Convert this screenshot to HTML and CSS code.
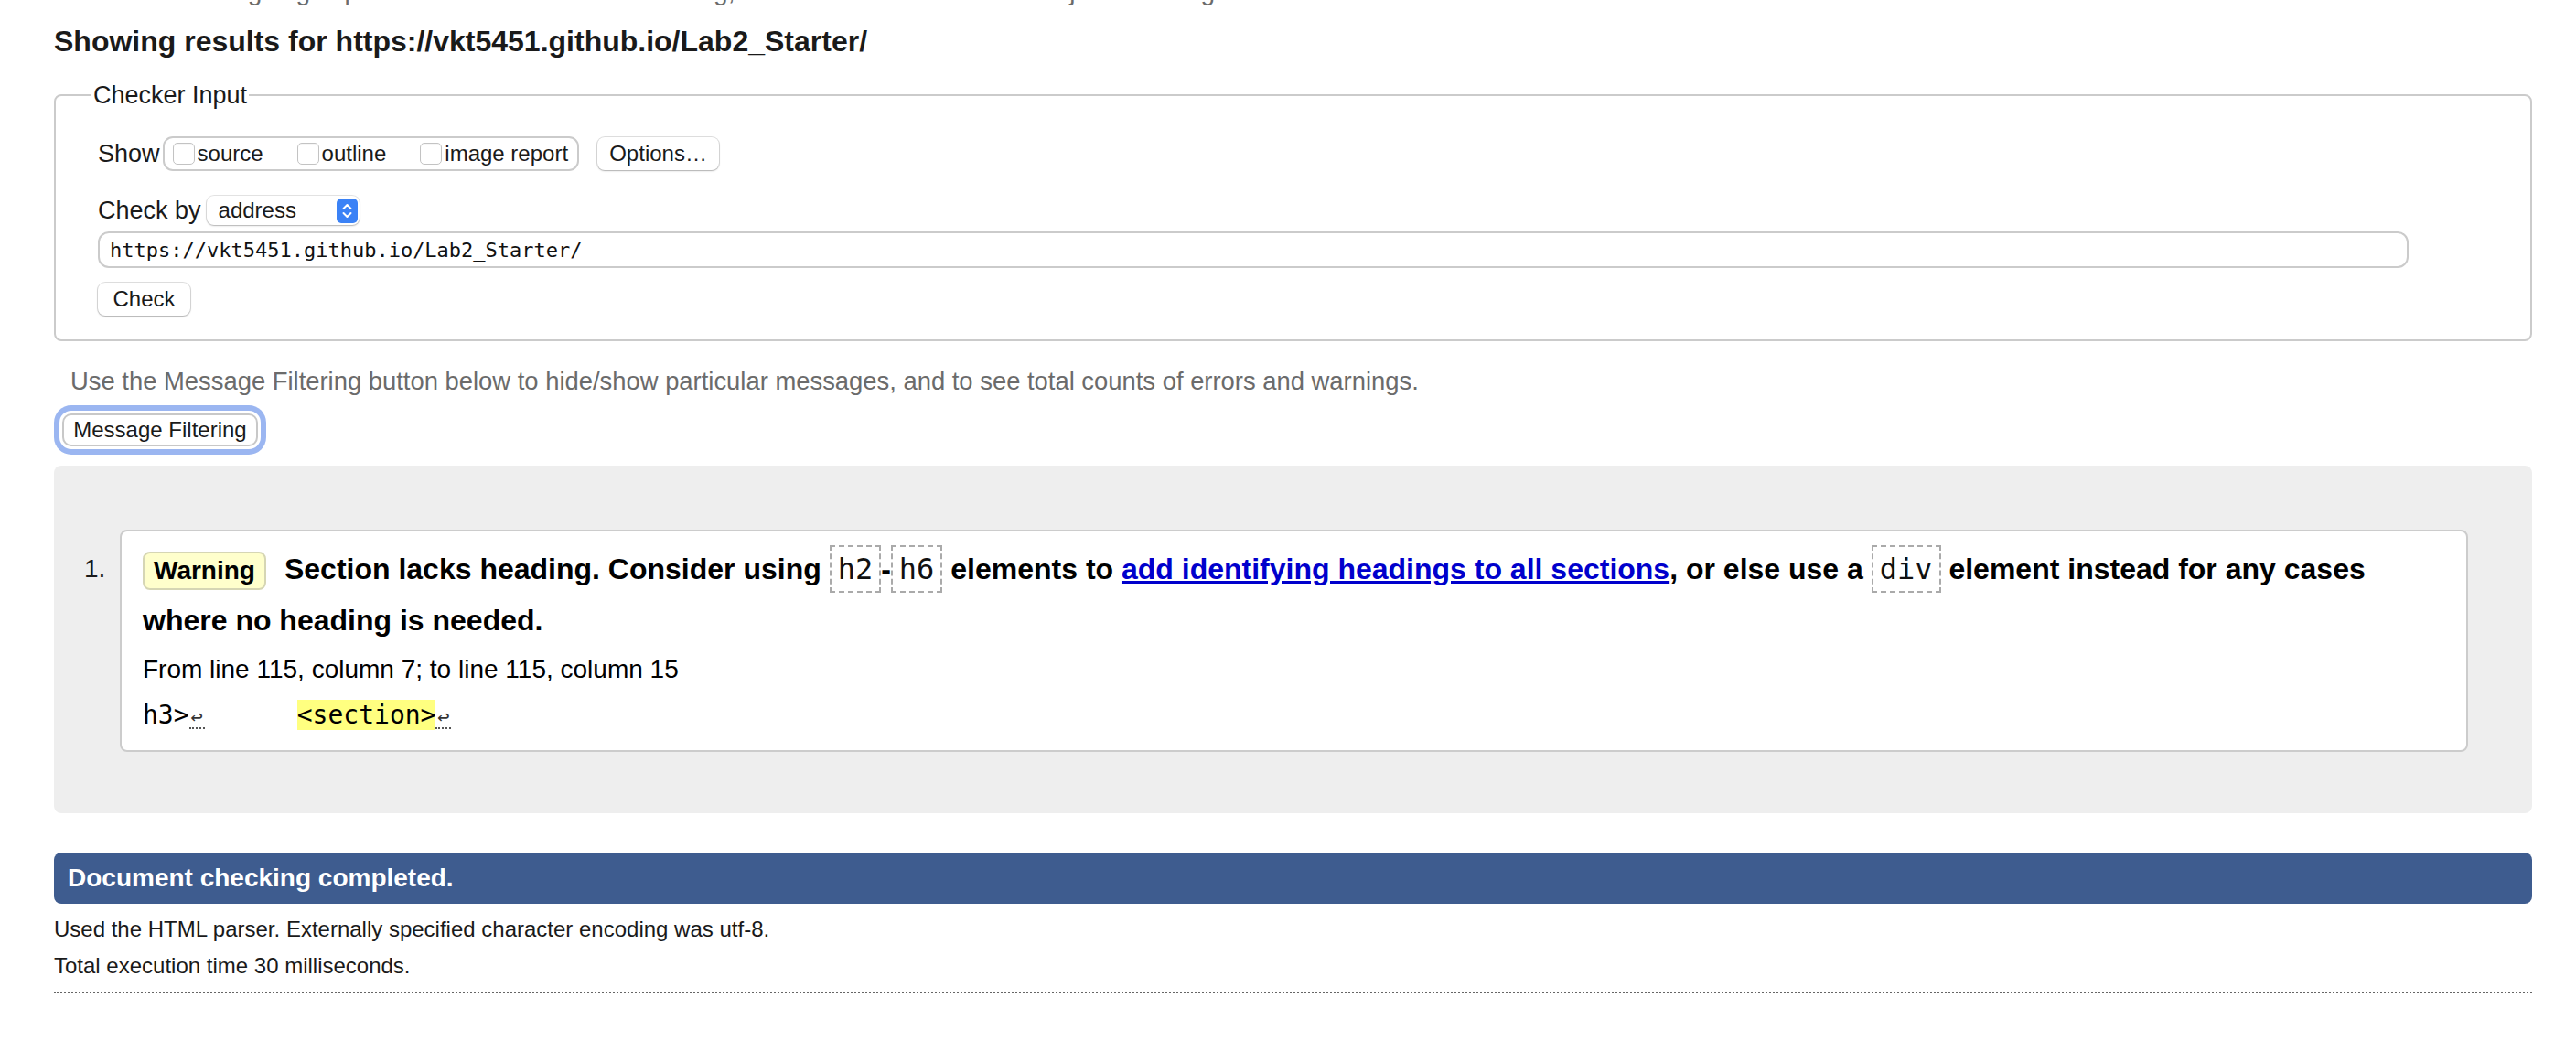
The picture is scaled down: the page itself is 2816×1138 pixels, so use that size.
FILE: index.html
```html
<!DOCTYPE html>
<html lang="en">
<head>
<meta charset="utf-8">
<title>Showing results for https://vkt5451.github.io/Lab2_Starter/ - Nu Html Checker</title>
<link rel="stylesheet" href="styles.css">
</head>
<body>
<div class="page">
  <p class="intro">This tool is an ongoing experiment in better HTML checking, and its behavior remains subject to change</p>
  <h2 class="results-title">Showing results for https://vkt5451.github.io/Lab2_Starter/</h2>

  <form class="checker">
    <fieldset class="checker-input">
      <legend>Checker Input</legend>
      <div class="row show-row">
        <span class="row-label">Show</span>
        <div class="show-group">
          <label class="opt"><input type="checkbox"><span>source</span></label>
          <label class="opt"><input type="checkbox"><span>outline</span></label>
          <label class="opt"><input type="checkbox"><span>image report</span></label>
        </div>
        <button type="button" class="btn options">Options…</button>
      </div>
      <div class="row checkby-row">
        <span class="row-label">Check by</span>
        <div class="select">
          <span>address</span>
          <svg class="select-arrow" width="23" height="27" viewBox="0 0 23 27" aria-hidden="true">
            <rect x="0" y="0" width="23" height="27" rx="5" fill="#3b82f6"/>
            <path d="M7.5 11 L11.5 7 L15.5 11" fill="none" stroke="#fff" stroke-width="2" stroke-linecap="round" stroke-linejoin="round"/>
            <path d="M7.5 16 L11.5 20 L15.5 16" fill="none" stroke="#fff" stroke-width="2" stroke-linecap="round" stroke-linejoin="round"/>
          </svg>
        </div>
      </div>
      <div class="row url-row">
        <input class="url" type="text" value="https://vkt5451.github.io/Lab2_Starter/">
      </div>
      <div class="row check-row">
        <button type="button" class="btn check">Check</button>
      </div>
    </fieldset>
  </form>

  <p class="filter-note">Use the Message Filtering button below to hide/show particular messages, and to see total counts of errors and warnings.</p>
  <div class="filter-row">
    <button type="button" class="filter-btn">Message Filtering</button>
  </div>

  <ol class="messages">
    <li class="msg">
      <span class="num">1.</span>
      <div class="card">
        <p class="message"><span class="badge">Warning</span>Section lacks heading. Consider using <code>h2</code>-<code>h6</code> elements to <a href="#">add identifying headings to all sections</a>, or else use a <code>div</code> element instead for any cases where no heading is needed.</p>
        <p class="location">From line 115, column 7; to line 115, column 15</p>
        <p class="extract"><code>h3&gt;<span class="lf">↩</span>      <b>&lt;section&gt;</b><span class="lf">↩</span></code></p>
      </div>
    </li>
  </ol>

  <h2 class="completed">Document checking completed.</h2>
  <div class="details">
    <p>Used the HTML parser. Externally specified character encoding was utf-8.</p>
    <p>Total execution time 30 milliseconds.</p>
  </div>
  <hr class="rule">
</div>
</body>
</html>
```
FILE: styles.css
```css
* {
  box-sizing: border-box;
}

html,
body {
  margin: 0;
  padding: 0;
  background: #ffffff;
}

body {
  font-family: "Liberation Sans", Arial, Helvetica, sans-serif;
  color: #1b1b1b;
  overflow: hidden;
}

.page {
  margin: 0 48px 0 59px;
}

.intro {
  margin: -26px 0 0;
  font-size: 28px;
  line-height: 34px;
  color: #6b6b6b;
  white-space: nowrap;
}

.results-title {
  margin: 18px 0 0;
  font-size: 32px;
  line-height: 38px;
  font-weight: bold;
  color: #1a1a1a;
}

/* ---------- Checker input ---------- */

.checker {
  margin: 24px 0 0;
}

.checker-input {
  margin: 0;
  min-width: 0;
  border: 2px solid #cbcbcb;
  border-radius: 8px;
  padding: 29px 133px 26px 46px;
}

.checker-input legend {
  font-size: 27px;
  line-height: 32px;
  padding: 0 2px;
  margin-left: -7px;
  color: #1a1a1a;
}

.row {
  display: flex;
  align-items: center;
}

.row-label {
  font-size: 27px;
  color: #1a1a1a;
}

.show-row {
  height: 38px;
}

.show-group {
  display: flex;
  align-items: center;
  height: 38px;
  margin-left: 3px;
  padding: 0 10px 0 9px;
  border: 2px solid #cbcbcb;
  border-radius: 11px;
}

.opt {
  display: flex;
  align-items: center;
  font-size: 24px;
  color: #1a1a1a;
  margin-right: 37px;
}

.opt:last-child {
  margin-right: 0;
}

.opt input {
  appearance: none;
  -webkit-appearance: none;
  margin: 0 3px 0 0;
  width: 24px;
  height: 24px;
  border: 1.5px solid #c3c3c3;
  border-radius: 5px;
  background: #ffffff;
  box-shadow: inset 0 1px 1px rgba(0, 0, 0, 0.04);
}

.btn {
  font-family: "Liberation Sans", Arial, Helvetica, sans-serif;
  font-size: 24px;
  color: #1a1a1a;
  background: #ffffff;
  border: none;
  border-radius: 8px;
  box-shadow: 0 0 0 1px rgba(0, 0, 0, 0.12), 0 1px 2px rgba(0, 0, 0, 0.22);
  height: 36px;
  padding: 0;
}

.options {
  margin-left: 20px;
  width: 133px;
}

.checkby-row {
  margin-top: 27px;
  height: 32px;
}

.select {
  margin-left: 6px;
  width: 167px;
  height: 32px;
  display: flex;
  align-items: center;
  justify-content: space-between;
  padding: 0 2px 0 13px;
  font-size: 24px;
  color: #1a1a1a;
  background: #ffffff;
  border-radius: 8px;
  box-shadow: 0 0 0 1px rgba(0, 0, 0, 0.1), 0 1px 2px rgba(0, 0, 0, 0.22);
}

.select-arrow {
  display: block;
  flex: none;
}

.url-row {
  margin-top: 7px;
}

.url {
  width: 100%;
  height: 40px;
  margin: 0;
  border: 2px solid #cbcbcb;
  border-radius: 12px;
  padding: 0 0 0 11px;
  font-family: "DejaVu Sans Mono", "Liberation Mono", monospace;
  font-size: 22px;
  color: #111111;
  background: #ffffff;
}

.check-row {
  margin-top: 16px;
}

.check {
  width: 101px;
}

/* ---------- Filtering ---------- */

.filter-note {
  margin: 27px 0 0 18px;
  font-size: 27.4px;
  line-height: 34px;
  color: #6b6b6b;
}

.filter-row {
  margin: 18px 0 0 9px;
}

.filter-btn {
  display: block;
  width: 214px;
  height: 36px;
  padding: 0;
  font-family: "Liberation Sans", Arial, Helvetica, sans-serif;
  font-size: 24px;
  color: #1a1a1a;
  background: #ffffff;
  border: 2px solid #c8c8c8;
  border-radius: 10px;
  box-shadow: 0 0 0 3px #ffffff, 0 0 0 9px #9bb6f1;
}

/* ---------- Messages ---------- */

.messages {
  list-style: none;
  margin: 21px 0 0;
  padding: 70px 70px 67px 33px;
  background: #eeeeee;
  border-radius: 8px;
}

.msg {
  display: flex;
}

.num {
  flex: none;
  width: 39px;
  padding-top: 15px;
  font-size: 28px;
  line-height: 56px;
  color: #1a1a1a;
}

.card {
  flex: 1;
  min-width: 0;
  background: #ffffff;
  border: 2px solid #cccccc;
  border-radius: 8px;
  padding: 13px 23px 20px 23px;
}

.message {
  margin: 0;
  font-size: 32px;
  line-height: 56px;
  font-weight: bold;
  color: #000000;
}

.badge {
  display: inline-block;
  font-size: 28px;
  line-height: 34px;
  padding: 2px 10px;
  margin-right: 20px;
  border: 2px solid #d6d6b4;
  border-radius: 8px;
  background: #ffffcc;
  color: #000000;
}

.message code {
  font-family: "DejaVu Sans Mono", "Liberation Mono", monospace;
  font-weight: normal;
  font-size: 32px;
  line-height: 1;
  padding: 5px 7px;
  border: 2px dashed #aaaaaa;
  color: #111111;
}

.message a {
  color: #0000cc;
  text-decoration: underline;
}

.location {
  margin: 8px 0 0;
  font-size: 28px;
  line-height: 36px;
  color: #000000;
}

.extract {
  margin: 14px 0 0;
  font-size: 28px;
  line-height: 36px;
  white-space: pre;
}

.extract code {
  font-family: "DejaVu Sans Mono", "Liberation Mono", monospace;
  font-size: 28px;
  color: #000000;
}

.extract b {
  font-weight: normal;
  background: #ffff80;
}

.lf {
  display: inline-block;
  width: 17px;
  font-size: 22px;
  line-height: 22px;
  color: #333333;
  border-bottom: 2px dotted #555555;
  text-align: center;
}

/* ---------- Completion ---------- */

.completed {
  margin: 43px 0 0;
  padding: 0 15px;
  font-size: 28px;
  line-height: 56px;
  font-weight: bold;
  color: #ffffff;
  background: #3e5c8f;
  border-radius: 8px;
}

.details {
  margin-top: 13px;
}

.details p {
  margin: 0;
  font-size: 24px;
  line-height: 30px;
  color: #1a1a1a;
}

.details p + p {
  margin-top: 10px;
}

.rule {
  margin: 13px 0 0;
  border: 0;
  border-top: 2px dotted #666666;
  height: 0;
}
```
